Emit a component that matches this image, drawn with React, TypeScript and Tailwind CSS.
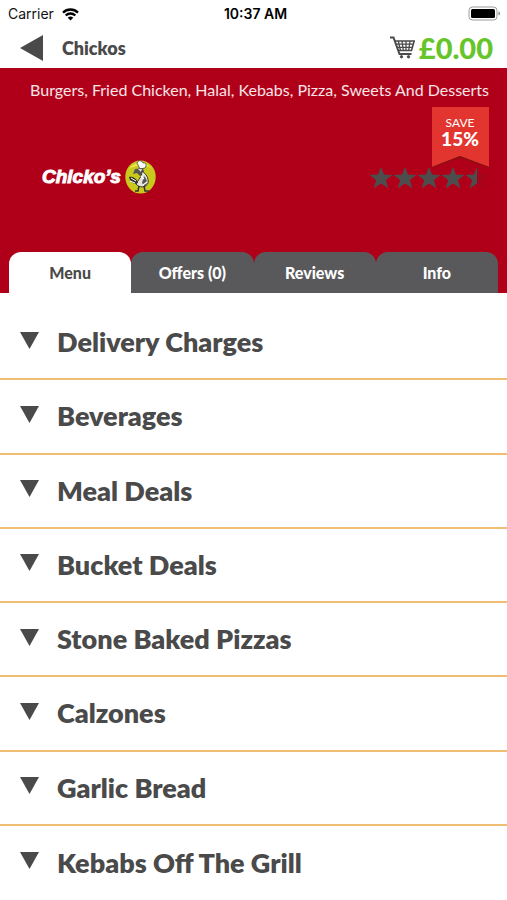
import React, { useState } from 'react';

const TABS = ['Menu', 'Offers (0)', 'Reviews', 'Info'];

const CATEGORIES = [
  'Delivery Charges',
  'Beverages',
  'Meal Deals',
  'Bucket Deals',
  'Stone Baked Pizzas',
  'Calzones',
  'Garlic Bread',
  'Kebabs Off The Grill'
];

const STAR = 'M12 1l3 7.6 8.500.3-6.600 5.200 2.300 8.200-7.200-4.700-7.200 4.700 2.300-8.200L.5 8.900l8.500-.3z';

function StatusBar() {
  return (
    <div className="grid grid-cols-3 items-center h-7 pl-2 pr-1 font-['Inter',sans-serif] text-sm text-[#111]">
      <div className="flex items-center gap-2">
        <span>Carrier</span>
        <svg width="17" height="13" viewBox="0 0 17 13" fill="none" stroke="#000" strokeWidth="2.300">
          <path d="M1 4.600a10.600 10.600 0 0 1 15 0" />
          <path d="M3.700 7.500a6.800 6.800 0 0 1 9.600 0" />
          <path d="M8.500 12.600L5.700 9.800a4 4 0 0 1 5.600 0z" fill="#000" stroke="none" />
        </svg>
      </div>
      <span className="text-center font-semibold text-black">10:37 AM</span>
      <svg className="justify-self-end" width="35" height="16" viewBox="0 0 35 16">
        <rect x="1" y="1" width="28" height="13" rx="3.500" fill="#fff" stroke="#999" />
        <rect x="3" y="3" width="24" height="9" rx="1.500" fill="#000" />
        <path d="M30.500 5.500c2 .6 2 3.400 0 4z" fill="#888" />
      </svg>
    </div>
  );
}

function CartIcon() {
  return (
    <svg width="25" height="24" viewBox="0 0 25 24" fill="none" stroke="#4a4a4a">
      <path d="M0 1.500h3.500L9.500 18h12" strokeWidth="2" />
      <path d="M4.500 5h19.700L21.500 14.500H8" strokeWidth="1.600" />
      <path d="M5.800 8.200h17.500M7 11.400h15.400M8.300 5l2.200 9.500M12 5l1.300 9.500M16 5v9.500M20 5l-1.300 9.500" strokeWidth="1.300" />
      <circle cx="11.500" cy="20.800" r="1.200" fill="#4a4a4a" />
      <circle cx="18.500" cy="20.800" r="1.200" fill="#4a4a4a" />
    </svg>
  );
}

function Header() {
  return (
    <header className="flex items-center justify-between h-10 pl-5 pr-3.5">
      <div className="flex items-center gap-[19px]">
        <button type="button" aria-label="Back">
          <svg width="23" height="26" viewBox="0 0 23 26">
            <path d="M0 13L23 0v26z" fill="#4a4a4a" />
          </svg>
        </button>
        <h1 className="text-lg leading-6 font-extrabold">Chickos</h1>
      </div>
      <button type="button" className="flex items-center gap-1">
        <CartIcon />
        <span className="text-[29px] leading-8 font-black text-[#65c52b]">£0.00</span>
      </button>
    </header>
  );
}

function Logo() {
  return (
    <div className="flex items-center gap-1">
      <span className="font-['Liberation_Sans',sans-serif] text-[19px] leading-7 font-bold italic text-white [-webkit-text-stroke:1px_#fff]">
        Chicko’s
      </span>
      <svg width="31" height="34" viewBox="0 0 31 34">
        <ellipse cx="15.500" cy="17" rx="15.200" ry="16.500" fill="#c9c91c" />
        <path d="M4 9C9 1 20 0 26 8c-6-3-15-3-22 1z" fill="#e8e64b" />
        <path d="M12 3c1-3 5-3 6 0 3-1 4 2 2 5l-5 1z" fill="#fff" stroke="#444" strokeWidth=".8" />
        <path d="M10 9l8-1 1 4-4 4-3-3-4 1z" fill="#555" />
        <path d="M13 9l4 0-1 3z" fill="#ddd" />
        <path d="M17 11c4 3 7 7 6 12-2 5-9 5-12 1 2-4 6-7 6-13z" fill="#e4e4d8" stroke="#333" />
        <path d="M4 17c4-1 8 2 9 6-4 2-8-1-9-6z" fill="#333" />
        <path d="M6 18l5 3M5 21l5 2" stroke="#fff" />
        <path d="M19 16c3 3 4 7 1 11l-3-4z" fill="#555" />
        <path d="M16 16l3 3M18 25l4-3" stroke="#fff" strokeWidth="1.200" />
        <path d="M14 26l-1 5h-3M19 26l1 5h4" stroke="#333" strokeWidth="1.500" fill="none" />
      </svg>
    </div>
  );
}

function SaveRibbon() {
  return (
    <div className="relative w-[58px] h-[61px] pt-2 text-center text-white">
      <svg className="absolute inset-0" width="58" height="61" viewBox="0 0 58 61">
        <path d="M1 0h57v60L29 49 1 60z" fill="#e3352f" />
        <path d="M1 60l28-11 29 11v1L29 51 1 61z" fill="#8c1010" />
      </svg>
      <div className="relative text-xs leading-4">SAVE</div>
      <div className="relative text-[19px] leading-4 font-black">15%</div>
    </div>
  );
}

function Rating() {
  return (
    <div role="img" aria-label="4.5 out of 5 stars" className="flex">
      {[1, 2, 3, 4].map(n => (
        <svg key={n} width="24" height="24" viewBox="0 0 24 24">
          <path d={STAR} fill="#4d4d4d" />
        </svg>
      ))}
      <svg width="24" height="24" viewBox="0 0 24 24">
        <path d={STAR} fill="#a3061c" />
        <path d="M12 1v16.600l-7.200 4.700 2.300-8.200L.5 8.900l8.500-.3z" fill="#4d4d4d" />
      </svg>
    </div>
  );
}

function Hero() {
  return (
    <section className="flex flex-col h-[184px] bg-[#b00019]">
      <p className="pt-3 pr-[18px] pb-1 text-right text-base leading-5 text-white/90">
        Burgers, Fried Chicken, Halal, Kebabs, Pizza, Sweets And Desserts
      </p>
      <div className="flex justify-between pt-[3px] pl-[42px] pr-[18px]">
        <div className="flex items-center pt-[53px]">
          <Logo />
        </div>
        <div className="flex flex-col items-end">
          <SaveRibbon />
          <div className="-mt-0.5">
            <Rating />
          </div>
        </div>
      </div>
    </section>
  );
}

export default function App() {
  const [activeTab, setActiveTab] = useState('Menu');

  return (
    <div className="min-h-screen flex flex-col bg-white font-['Lato',sans-serif] text-[#4a4a4a]">
      <StatusBar />
      <Header />
      <Hero />

      {/* Tabs */}
      <nav className="grid grid-cols-4 px-[9px] bg-[#b00019]">
        {TABS.map(tab => (
          <button
            key={tab}
            type="button"
            onClick={() => setActiveTab(tab)}
            className={
              tab === activeTab
                ? 'h-[41px] rounded-t-xl bg-white text-base font-black'
                : 'h-[41px] rounded-t-xl bg-[#59595b] text-base font-black text-white'
            }
          >
            {tab}
          </button>
        ))}
      </nav>

      {/* Menu categories */}
      <ul className="flex-1 grid auto-rows-fr pt-[13px]">
        {CATEGORIES.map(name => (
          <li key={name} className="flex border-b-2 border-[#f0bd74] last:border-b-0">
            <button type="button" className="flex flex-1 items-center gap-[18px] px-5 text-left">
              <svg width="19" height="17" viewBox="0 0 19 17" className="mb-1">
                <path d="M0 0h19L9.500 17z" fill="#4a4a4a" />
              </svg>
              <span className="text-[27px] leading-9 font-extrabold">{name}</span>
            </button>
          </li>
        ))}
      </ul>
    </div>
  );
}
